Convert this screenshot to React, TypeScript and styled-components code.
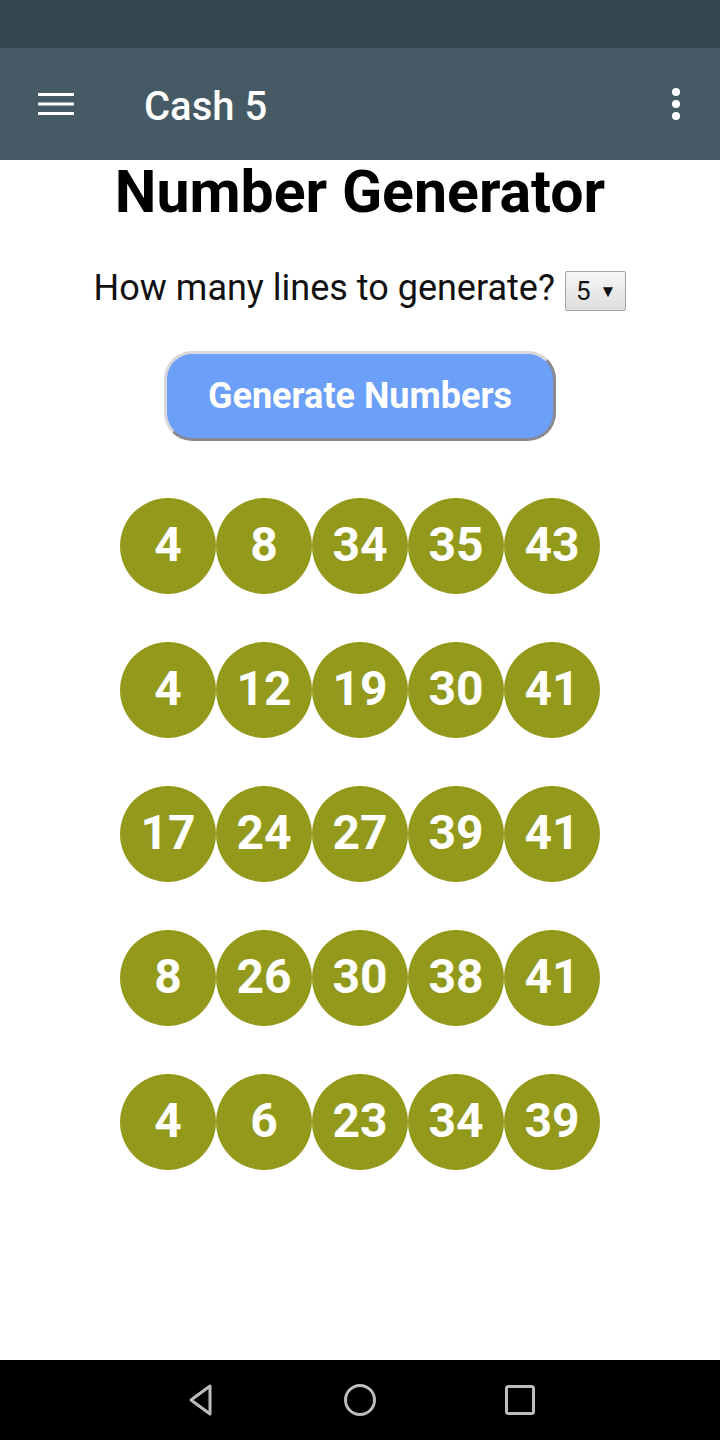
import styled, {createGlobalStyle} from 'styled-components';

const rows: number[][] = [
	[4, 8, 34, 35, 43],
	[4, 12, 19, 30, 41],
	[17, 24, 27, 39, 41],
	[8, 26, 30, 38, 41],
	[4, 6, 23, 34, 39],
];

const GlobalStyle = createGlobalStyle`
	html, body {
		margin: 0;
		padding: 0;
		background: #ffffff;
		font-family: Roboto, 'Liberation Sans', sans-serif;
	}
`;

const App = () => {
	return (
		<Screen>
			<GlobalStyle />
			<StatusBar />
			<AppBar>
				<IconButton aria-label="menu">
					<svg width="36" height="24" viewBox="0 0 36 24">
						<rect x="0" y="1" width="36" height="3" fill="#fff" />
						<rect x="0" y="10.5" width="36" height="3" fill="#fff" />
						<rect x="0" y="20" width="36" height="3" fill="#fff" />
					</svg>
				</IconButton>
				<AppTitle>Cash 5</AppTitle>
				<IconButton aria-label="more">
					<svg width="10" height="34" viewBox="0 0 10 34">
						<circle cx="5" cy="5" r="4" fill="#fff" />
						<circle cx="5" cy="17" r="4" fill="#fff" />
						<circle cx="5" cy="29" r="4" fill="#fff" />
					</svg>
				</IconButton>
			</AppBar>
			<Content>
				<Heading>Number Generator</Heading>
				<LinesRow>
					<span>How many lines to generate?</span>
					<Select>
						5 <Arrow>▼</Arrow>
					</Select>
				</LinesRow>
				<GenerateButton>Generate Numbers</GenerateButton>
				<Results>
					{rows.map((line, i) => (
						<BallRow key={i}>
							{line.map((n, j) => (
								<Ball key={j}>{n}</Ball>
							))}
						</BallRow>
					))}
				</Results>
			</Content>
			<NavBar>
				<svg width="34" height="34" viewBox="0 0 34 34">
					<path d="M27 3 L27 31 L8 17 Z" fill="none" stroke="#bdbdbd" strokeWidth="3" strokeLinejoin="round" />
				</svg>
				<svg width="34" height="34" viewBox="0 0 34 34">
					<circle cx="17" cy="17" r="14.5" fill="none" stroke="#bdbdbd" strokeWidth="3" />
				</svg>
				<svg width="34" height="34" viewBox="0 0 34 34">
					<rect x="3.5" y="3.5" width="27" height="27" rx="2" fill="none" stroke="#bdbdbd" strokeWidth="3" />
				</svg>
			</NavBar>
		</Screen>
	);
};

const Screen = styled.div`
	display: flex;
	flex-direction: column;
	width: 720px;
	height: 1440px;
	overflow: hidden;
`;

const StatusBar = styled.div`
	height: 48px;
	background: #37474f;
	flex-shrink: 0;
`;

const AppBar = styled.header`
	display: flex;
	align-items: center;
	height: 112px;
	padding: 0 39px 0 38px;
	background: #455a64;
	flex-shrink: 0;
`;

const IconButton = styled.div`
	display: flex;
	align-items: center;
	justify-content: center;
`;

const AppTitle = styled.h1`
	flex: 1;
	margin: 4px 0 0 70px;
	color: #ffffff;
	font-size: 40px;
	font-weight: 500;
`;

const Content = styled.main`
	flex: 1;
	display: flex;
	flex-direction: column;
	align-items: center;
`;

const Heading = styled.h2`
	margin: 0;
	font-size: 59px;
	font-weight: 700;
	color: #000;
	line-height: 64px;
`;

const LinesRow = styled.div`
	display: flex;
	align-items: center;
	gap: 10px;
	margin-top: 41px;
	font-size: 36px;
	color: #111;
	line-height: 40px;
`;

const Select = styled.div`
	display: flex;
	align-items: center;
	gap: 9px;
	height: 38px;
	margin-top: 6px;
	padding: 0 9px 0 10px;
	border: 1px solid #a3a3a3;
	border-radius: 2px;
	background: linear-gradient(#f6f6f6, #dedede);
	font-size: 26px;
	color: #111;
`;

const Arrow = styled.span`
	font-size: 17px;
`;

const GenerateButton = styled.button`
	width: 392px;
	height: 90px;
	margin-top: 40px;
	border: 3px solid;
	border-color: #d9d9d9 #8a8a94 #8a8a94 #d9d9d9;
	border-radius: 28px;
	background: #6b9ff8;
	color: #ffffff;
	font-family: Roboto, 'Liberation Sans', sans-serif;
	font-size: 36px;
	font-weight: 700;
`;

const Results = styled.section`
	display: flex;
	flex-direction: column;
	gap: 48px;
	margin-top: 57px;
`;

const BallRow = styled.div`
	display: flex;
`;

const Ball = styled.div`
	display: flex;
	align-items: center;
	justify-content: center;
	width: 96px;
	height: 96px;
	padding-bottom: 3px;
	box-sizing: border-box;
	border-radius: 50%;
	background: #939a1b;
	color: #ffffff;
	font-size: 48px;
	font-weight: 700;
`;

const NavBar = styled.nav`
	display: flex;
	align-items: center;
	justify-content: center;
	gap: 126px;
	height: 80px;
	background: #000;
	flex-shrink: 0;
`;

export default App;
